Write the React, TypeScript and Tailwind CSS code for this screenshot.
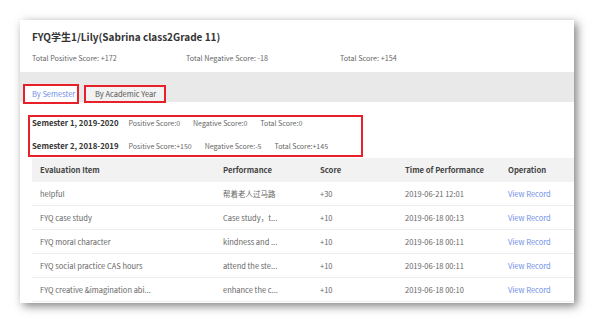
const rows = [
  { item: "helpful", perf: "帮着老人过马路", score: "+30", time: "2019-06-21 12:01" },
  { item: "FYQ case study", perf: "Case study，t...", score: "+10", time: "2019-06-18 00:13" },
  { item: "FYQ moral character", perf: "kindness and ...", score: "+10", time: "2019-06-18 00:11" },
  { item: "FYQ social practice CAS hours", perf: "attend the ste...", score: "+10", time: "2019-06-18 00:11" },
  { item: "FYQ creative &imagination abi...", perf: "enhance the c...", score: "+10", time: "2019-06-18 00:10" },
];

const semesters = [
  { name: "Semester 1, 2019-2020", pos: "0", neg: "0", total: "0" },
  { name: "Semester 2, 2018-2019", pos: "+150", neg: "-5", total: "+145" },
];

export default function App() {
  return (
    <div
      className="w-[594px] h-[324px] bg-white pt-[20px] pl-[20px] overflow-hidden"
      style={{ fontFamily: '"Noto Sans CJK SC", "Noto Sans", sans-serif' }}
    >
      <div className="w-[554px] h-[283px] bg-white shadow-[3px_3px_9px_rgba(0,0,0,0.5)] flex flex-col overflow-hidden">
        <div className="pl-[12px] pt-[9px] text-[10px] leading-[16px] font-bold text-[#333]">
          FYQ学生1/Lily(Sabrina class2Grade 11)
        </div>
        <div className="pl-[12px] mt-[8px] flex text-[7.2px] leading-[11px] text-[#666]">
          <span className="w-[154px]">Total Positive Score: +172</span>
          <span className="w-[154px]">Total Negative Score: -18</span>
          <span>Total Score: +154</span>
        </div>

        <div className="mt-[8px] h-[30px] bg-[#e9e9e9] flex items-end pl-[3px] gap-[5px]">
          <div className="w-[56px] h-[20px] -mb-[2px] border-2 border-[#e8202a] bg-white flex items-center pl-[7px] text-[7.5px] text-[#6f8fe6]">
            By Semester
          </div>
          <div className="w-[82px] h-[18px] -mb-[1px] border-2 border-[#e8202a] bg-[#f2f2f2] flex items-center pl-[9px] text-[7.5px] text-[#555]">
            By Academic Year
          </div>
        </div>

        <div className="ml-[8px] mt-[13px] w-[335px] h-[42px] border-2 border-[#e8202a] pl-[2px] flex flex-col">
          {semesters.map((s, i) => (
            <div
              key={s.name}
              className={`flex items-center h-[12px] text-[7px] text-[#666] ${i === 0 ? "mt-0" : "mt-[11px]"}`}
            >
              <span className="font-bold text-[7.8px] text-[#333] mr-[10px]">{s.name}</span>
              <span className="mr-[13px]">Positive Score:{s.pos}</span>
              <span className="mr-[13px]">Negative Score:{s.neg}</span>
              <span>Total Score:{s.total}</span>
            </div>
          ))}
        </div>

        <div className="ml-[12px] mt-[1px] flex flex-col text-[7.5px]">
          <div className="flex h-[24px] items-center bg-[#f2f2f2] font-bold text-[7.7px] text-[#444]">
            <div className="w-[183px] pl-[8px]">Evaluation Item</div>
            <div className="w-[97px] pl-[8px]">Performance</div>
            <div className="w-[85px] pl-[8px]">Score</div>
            <div className="w-[103px] pl-[8px]">Time of Performance</div>
            <div className="flex-1 pl-[8px]">Operation</div>
          </div>
          {rows.map((r) => (
            <div key={r.time + r.item} className="flex h-[24px] items-center border-b border-[#ececec] text-[#666]">
              <div className="w-[183px] pl-[8px]">{r.item}</div>
              <div className="w-[97px] pl-[8px]">{r.perf}</div>
              <div className="w-[85px] pl-[8px]">{r.score}</div>
              <div className="w-[103px] pl-[8px]">{r.time}</div>
              <div className="flex-1 pl-[8px] text-[#6f8fe6]">View Record</div>
            </div>
          ))}
        </div>
      </div>
    </div>
  );
}
